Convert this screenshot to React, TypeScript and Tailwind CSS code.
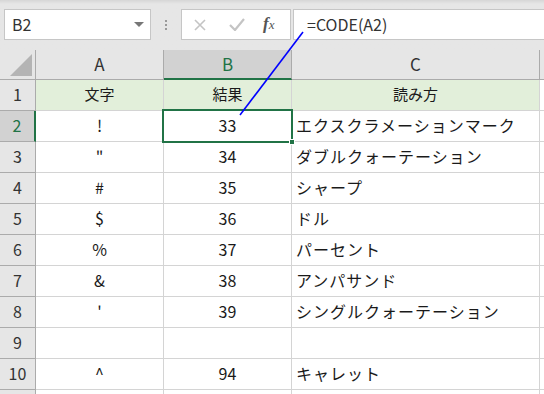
import React from "react";

const rows: { n: number; a: string; b: string; c: string }[] = [
  { n: 2, a: "!", b: "33", c: "エクスクラメーションマーク" },
  { n: 3, a: '"', b: "34", c: "ダブルクォーテーション" },
  { n: 4, a: "#", b: "35", c: "シャープ" },
  { n: 5, a: "$", b: "36", c: "ドル" },
  { n: 6, a: "%", b: "37", c: "パーセント" },
  { n: 7, a: "&", b: "38", c: "アンパサンド" },
  { n: 8, a: "'", b: "39", c: "シングルクォーテーション" },
  { n: 9, a: "", b: "", c: "" },
  { n: 10, a: "^", b: "94", c: "キャレット" },
];

const font = { fontFamily: '"Noto Sans CJK JP", "Noto Sans", sans-serif' };

export default function App() {
  return (
    <div
      className="relative w-[544px] h-[394px] overflow-hidden bg-[#e6e6e6] text-[#1a1a1a]"
      style={font}
    >
      {/* formula bar */}
      <div className="h-[50px] bg-gradient-to-b from-[#d6d6d6] via-[#e6e6e6] via-[8%] to-[#e6e6e6] pt-[9px] flex items-start">
        <div className="ml-[4px] w-[147px] h-[31px] bg-white border border-[#c6c6c6] flex items-center justify-between pl-[7px] pr-[6px]">
          <span className="text-[16px] text-[#333] pb-[2px]">B2</span>
          <svg width="10" height="6" viewBox="0 0 10 6">
            <polygon points="0,0 10,0 5,5" fill="#777" />
          </svg>
        </div>
        <div className="w-[30px] h-[31px] flex items-center justify-center">
          <div className="flex flex-col gap-[2px]">
            <div className="w-[2px] h-[2px] bg-[#9a9a9a]" />
            <div className="w-[2px] h-[2px] bg-[#9a9a9a]" />
            <div className="w-[2px] h-[2px] bg-[#9a9a9a]" />
          </div>
        </div>
        <div className="w-[110px] h-[31px] bg-white border border-[#c6c6c6] flex items-center">
          <svg className="ml-[12px]" width="12" height="12" viewBox="0 0 12 12">
            <path d="M1 1 L11 11 M11 1 L1 11" stroke="#c4c4c4" strokeWidth="1.6" />
          </svg>
          <svg className="ml-[23px]" width="16" height="13" viewBox="0 0 16 13">
            <path d="M1 7 L6 12 L15 1" stroke="#c4c4c4" strokeWidth="2.2" fill="none" />
          </svg>
          <span
            className="ml-[18px] text-[17px] italic font-bold text-[#555] pb-[2px]"
            style={{ fontFamily: '"Liberation Serif", serif' }}
          >
            f<span className="text-[13px] font-normal">x</span>
          </span>
        </div>
        <div className="ml-[2px] flex-1 h-[31px] bg-white border border-[#c6c6c6] border-r-0 flex items-center pl-[13px]">
          <span className="text-[16px] text-[#333] pb-[2px]">=CODE(A2)</span>
        </div>
      </div>

      {/* grid */}
      <div className="bg-white">
        {/* column header */}
        <div className="flex h-[30px] bg-[#e6e6e6] border-b border-[#ababab]">
          <div className="w-[36px] border-r border-[#ababab] relative">
            <svg className="absolute left-[10px] top-[4px]" width="22" height="22" viewBox="0 0 22 22">
              <polygon points="22,0 22,22 0,22" fill="#b4b4b4" />
            </svg>
          </div>
          <div className="w-[128px] border-r border-[#ababab] flex items-center justify-center text-[17px] text-[#333] pb-[2px]">
            A
          </div>
          <div className="w-[128px] border-r border-[#ababab] bg-[#d2d2d2] flex items-center justify-center text-[17px] text-[#217346] border-b-2 border-b-[#217346] -mb-[1px] pb-[1px]">
            B
          </div>
          <div className="w-[248px] border-r border-[#ababab] flex items-center justify-center text-[17px] text-[#333] pb-[2px]">
            C
          </div>
          <div className="flex-1" />
        </div>

        {/* row 1 */}
        <div className="flex h-[31px]">
          <div className="w-[36px] bg-[#e6e6e6] border-r border-b border-[#ababab] flex items-center justify-center text-[16px] text-[#333] pb-[2px]">
            1
          </div>
          <div className="w-[128px] bg-[#e2efda] border-r border-b border-[#d4d4d4] flex items-center justify-center text-[15px] pb-[2px]">
            文字
          </div>
          <div className="w-[128px] bg-[#e2efda] border-r border-b border-[#d4d4d4] flex items-center justify-center text-[15px] pb-[2px]">
            結果
          </div>
          <div className="w-[248px] bg-[#e2efda] border-r border-b border-[#d4d4d4] flex items-center justify-center text-[15px] pb-[2px]">
            読み方
          </div>
          <div className="flex-1 border-b border-[#d4d4d4]" />
        </div>

        {rows.map((r) => {
          const sel = r.n === 2;
          return (
            <div key={r.n} className="flex h-[31px]">
              <div
                className={
                  sel
                    ? "w-[36px] bg-[#d2d2d2] border-r-2 border-r-[#217346] border-b border-b-[#ababab] flex items-center justify-center text-[16px] text-[#217346] pb-[3px]"
                    : "w-[36px] bg-[#e6e6e6] border-r border-b border-[#ababab] flex items-center justify-center text-[16px] text-[#333] pb-[3px]"
                }
              >
                {r.n}
              </div>
              <div className="w-[128px] border-r border-b border-[#d4d4d4] flex items-center justify-center text-[16px] pb-[3px]">
                {r.a}
              </div>
              <div className="w-[128px] border-r border-b border-[#d4d4d4] flex items-center justify-center text-[16px] pb-[3px]">
                {r.b}
              </div>
              <div className="w-[248px] border-r border-b border-[#d4d4d4] flex items-center pl-[4px] text-[16px] tracking-[1px] whitespace-nowrap pb-[3px]">
                {r.c}
              </div>
              <div className="flex-1 border-b border-[#d4d4d4]" />
            </div>
          );
        })}
        <div className="flex h-[10px]">
          <div className="w-[36px] bg-[#e6e6e6] border-r border-[#ababab]" />
          <div className="w-[128px] border-r border-[#d4d4d4]" />
          <div className="w-[128px] border-r border-[#d4d4d4]" />
          <div className="w-[248px] border-r border-[#d4d4d4]" />
        </div>
      </div>

      {/* selection box */}
      <div className="absolute left-[162px] top-[109px] w-[131px] h-[34px] border-2 border-[#217346] pointer-events-none" />
      <div className="absolute left-[289px] top-[139px] w-[6px] h-[6px] bg-[#217346] border border-white" />

      {/* blue arrow line */}
      <svg className="absolute left-0 top-0 pointer-events-none" width="544" height="394">
        <line x1="303" y1="32" x2="240" y2="115" stroke="#0000ff" strokeWidth="1.6" />
      </svg>
    </div>
  );
}
